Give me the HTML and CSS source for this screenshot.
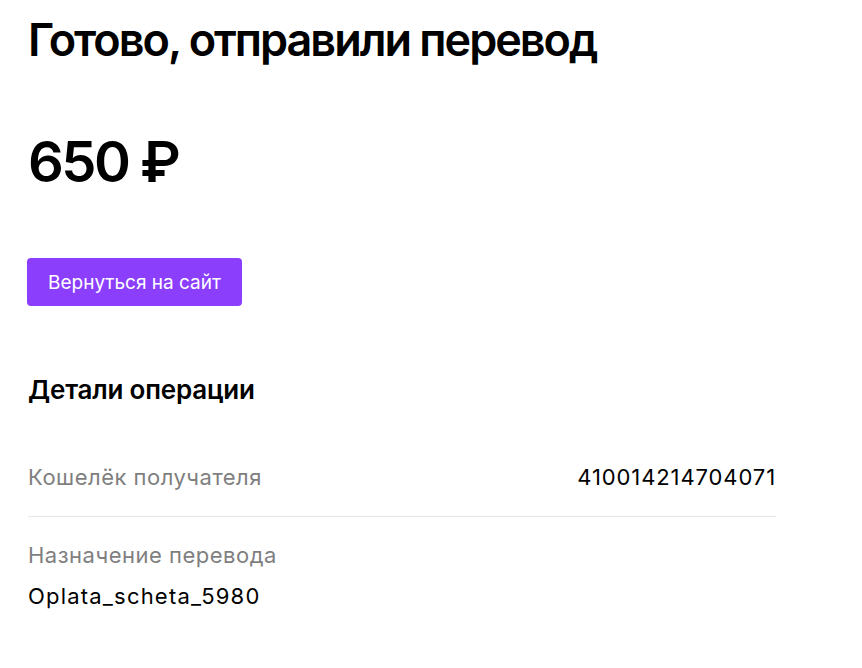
FILE: index.html
```html
<!DOCTYPE html>
<html lang="ru">
<head>
  <meta charset="UTF-8">
  <meta name="viewport" content="width=device-width, initial-scale=1.0">
  <title>Готово, отправили перевод</title>
  <link rel="stylesheet" href="styles.css">
</head>
<body>
  <main class="page">
    <h1 class="title">Готово, отправили перевод</h1>

    <div class="amount">650 ₽</div>

    <button type="button" class="back-btn">Вернуться на сайт</button>

    <section class="details">
      <h2 class="details-title">Детали операции</h2>

      <div class="detail-row detail-row--inline">
        <span class="detail-label">Кошелёк получателя</span>
        <span class="detail-value detail-value--number">410014214704071</span>
      </div>

      <div class="detail-row detail-row--stack">
        <div class="detail-label">Назначение перевода</div>
        <div class="detail-value">Oplata_scheta_5980</div>
      </div>
    </section>
  </main>
</body>
</html>
```

FILE: styles.css
```css
body {
  margin: 0;
  padding: 0;
  background-color: #fff;
  color: #000;
  font-family: Inter, "Noto Sans", Arial, sans-serif;
}

.page {
  width: 748px;
  padding: 12px 28px 40px;
}

.title {
  margin: 0;
  font-size: 45px;
  line-height: 56px;
  font-weight: 600;
  letter-spacing: -2px;
}

.amount {
  margin-top: 60px;
  font-size: 56px;
  line-height: 68px;
  font-weight: 600;
  letter-spacing: -2.5px;
}

.back-btn {
  display: block;
  margin: 62px 0 0 -1px;
  height: 48px;
  padding: 0 21px;
  border: none;
  border-radius: 4px;
  background-color: #8b3ffd;
  color: #fff;
  font-family: inherit;
  font-size: 19px;
  cursor: pointer;
}

.details {
  margin-top: 68px;
}

.details-title {
  margin: 0 0 43px;
  font-size: 26px;
  line-height: 32px;
  font-weight: 600;
  letter-spacing: -0.2px;
}

.detail-row {
  padding: 14px 0;
  font-size: 22px;
  line-height: 28px;
  letter-spacing: 0.5px;
}

.detail-row--inline {
  display: flex;
  justify-content: space-between;
  border-bottom: 1px solid #e6e6e6;
  padding-bottom: 25px;
}

.detail-row--stack {
  padding-top: 24px;
}

.detail-label {
  color: #7f7f7f;
}

.detail-value--number {
  letter-spacing: 0.9px;
}

.detail-row--stack .detail-value {
  margin-top: 13px;
  letter-spacing: 1.2px;
}
```
